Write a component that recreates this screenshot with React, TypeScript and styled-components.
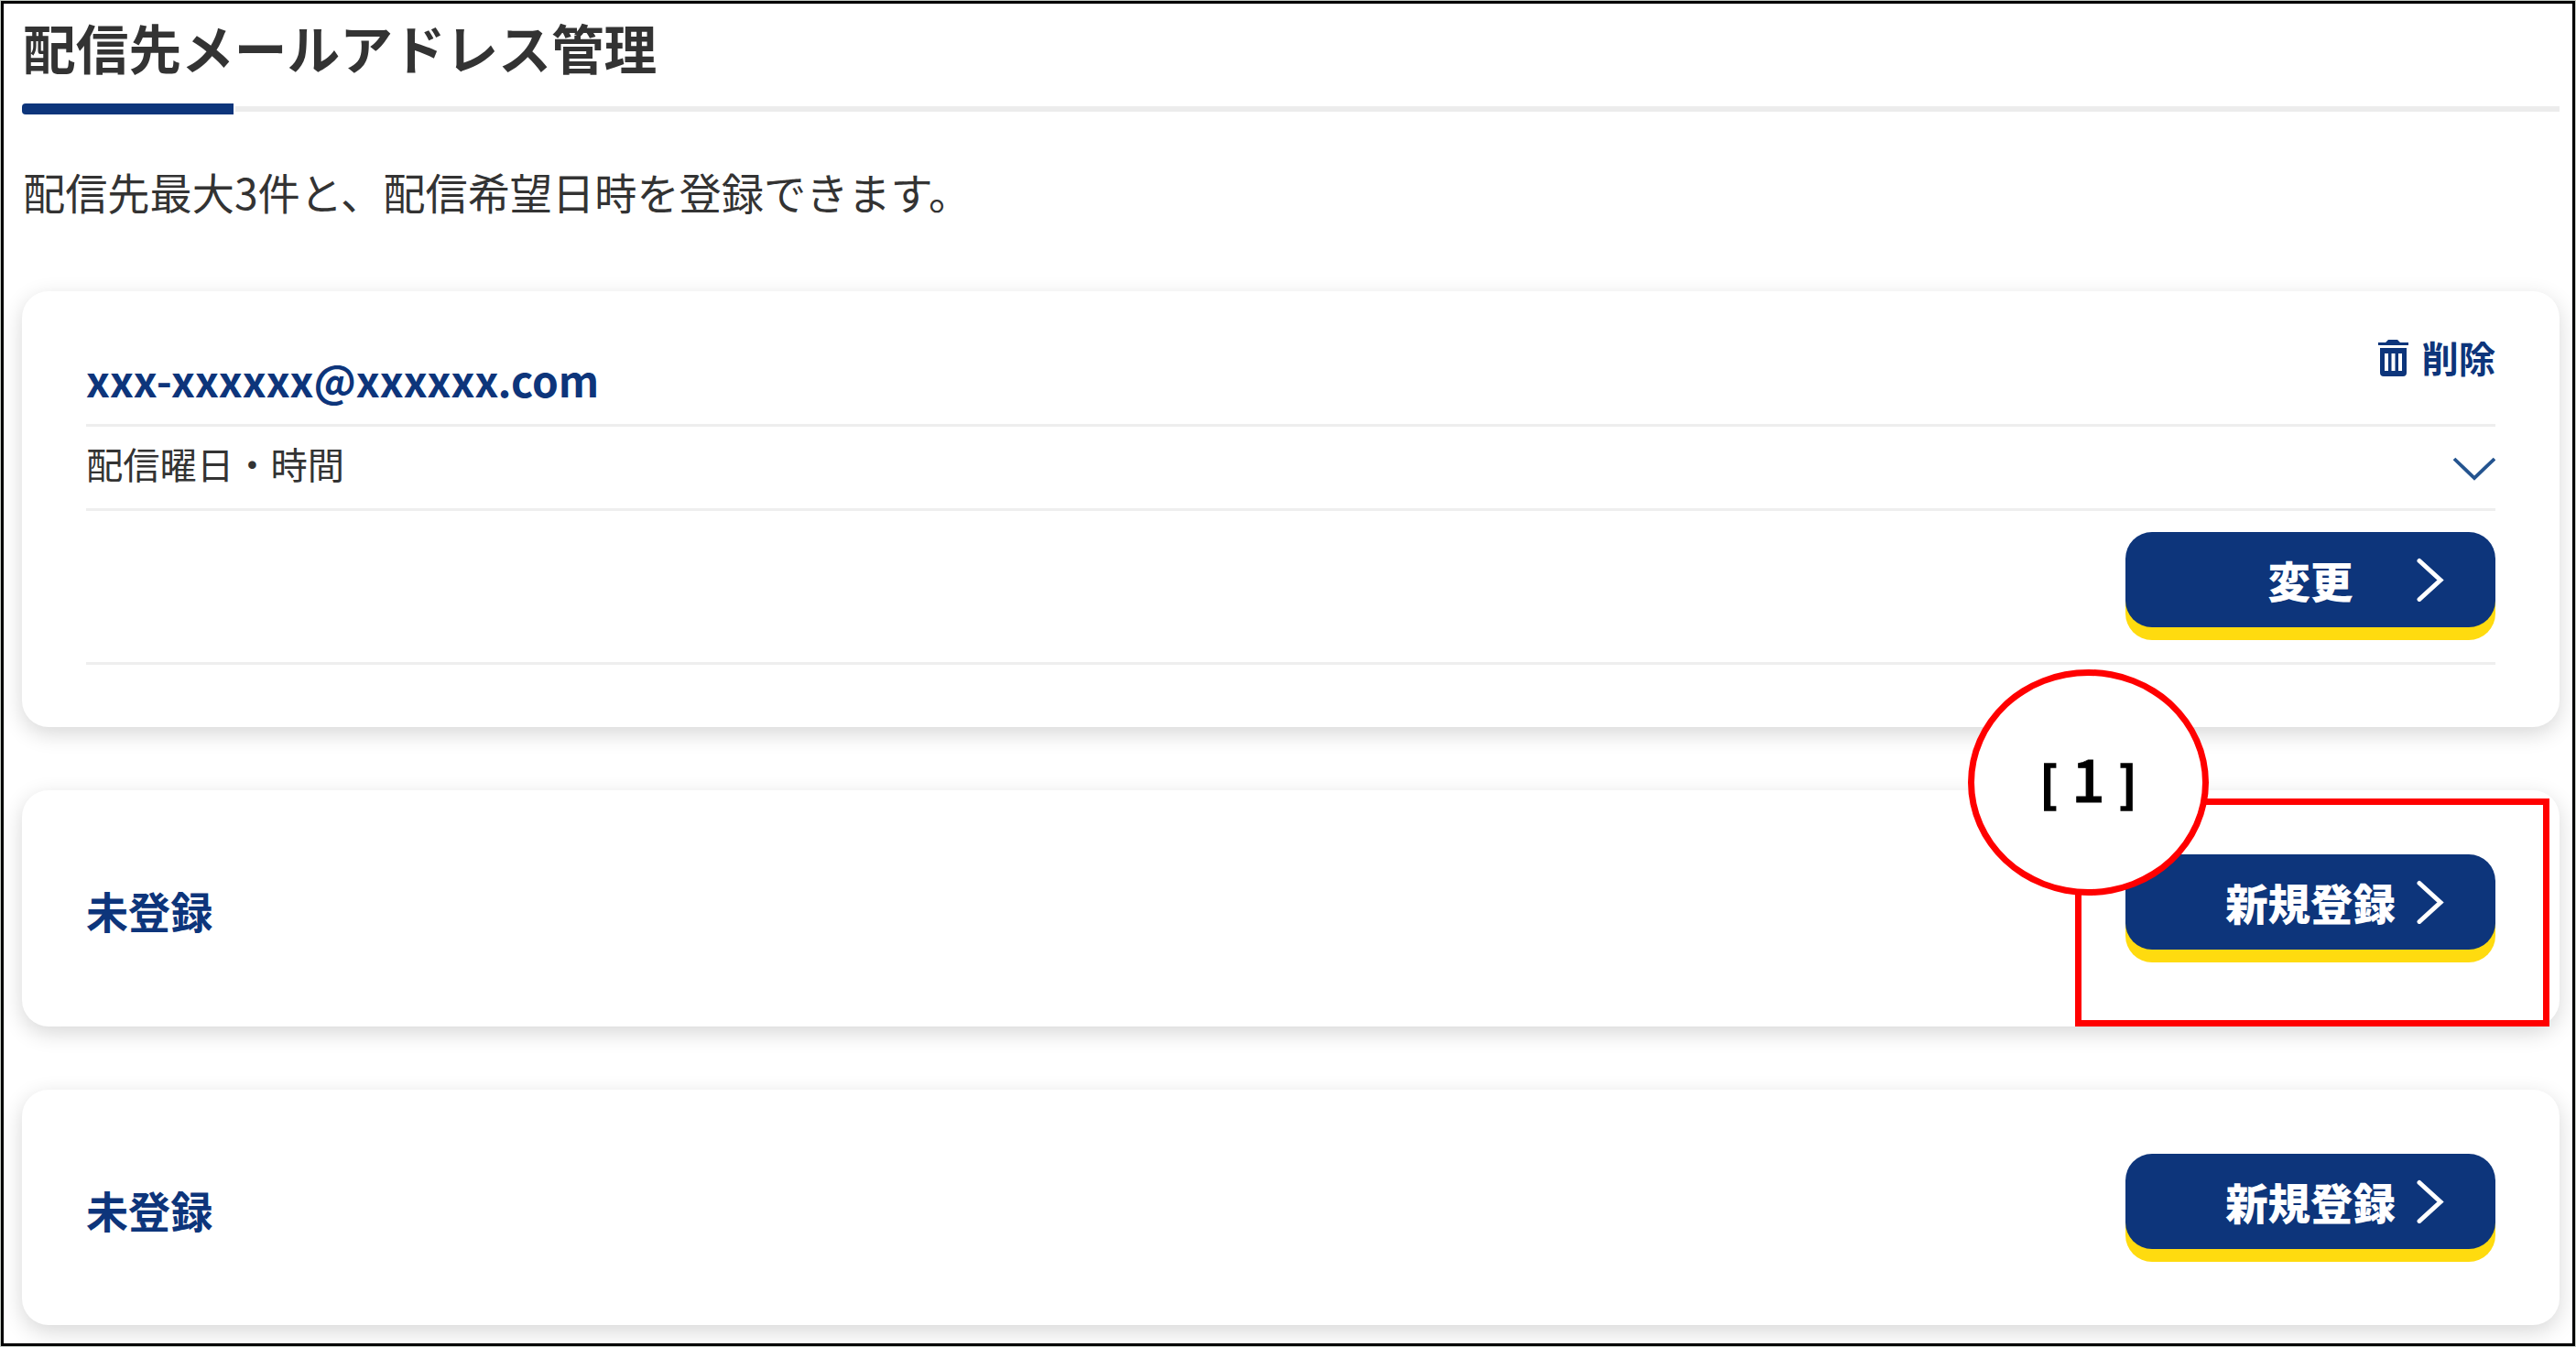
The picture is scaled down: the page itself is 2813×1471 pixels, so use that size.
import React, { FC } from 'react'
import styled, { createGlobalStyle } from 'styled-components'

const GlobalStyle = createGlobalStyle`
  * {
    box-sizing: border-box;
  }
  body {
    margin: 0;
    background: #fff;
    color: #333;
    font-family: 'Noto Sans CJK JP', 'Noto Sans', sans-serif;
  }
  h1, h2, p {
    margin: 0;
  }
`

const Frame = styled.main`
  position: relative;
  width: 2813px;
  height: 1471px;
  border: 1px solid #c4cac4;
  overflow: hidden;
`

const Page = styled.div`
  height: 100%;
  padding: 18px 14px 0 20px;
  border: 3px solid #000;
`

const Title = styled.h1`
  height: 91px;
  padding-left: 1px;
  font-size: 57.7px;
  line-height: 58px;
  font-weight: 700;
  white-space: nowrap;
`

const TitleLine = styled.div`
  display: flex;
  align-items: center;
  gap: 2px;
  height: 12px;

  &::before {
    content: '';
    width: 231px;
    height: 12px;
    border-radius: 4px 0 0 4px;
    background: #0d357b;
  }
  &::after {
    content: '';
    flex: 1;
    height: 6px;
    background: #ececec;
  }
`

const Lead = styled.p`
  height: 193px;
  padding: 61px 0 0 1px;
  font-size: 46.2px;
  line-height: 46px;
  white-space: nowrap;
`

const CardList = styled.div`
  display: flex;
  flex-direction: column;
  gap: 69px;
`

const Card = styled.section`
  padding: 0 70px;
  border-radius: 29px;
  background: #fff;
  box-shadow: 0 7px 23px rgba(0, 0, 0, 0.16);
`

const AddressCard = styled(Card)`
  height: 476px;
`

const EmptyCard = styled(Card)`
  display: flex;
  align-items: flex-start;
  justify-content: space-between;
  height: 257.5px;
  padding-top: 70px;
`

const Row = styled.div<{ $height: number }>`
  display: flex;
  justify-content: space-between;
  height: ${({ $height }) => $height}px;
  border-bottom: 3px solid #eee;
`

const CardTitle = styled.h2<{ $top: number }>`
  padding-top: ${({ $top }) => $top}px;
  color: #0d357b;
  font-size: 46.1px;
  line-height: 46px;
  font-weight: 700;
`

const DeleteButton = styled.button`
  display: flex;
  align-items: flex-start;
  gap: 13px;
  height: 60px;
  margin-top: 52px;
  padding: 0;
  border: 0;
  background: none;
  color: #0d357b;
  font: 700 40.3px/40px 'Noto Sans CJK JP', sans-serif;
`

const Schedule = styled.p`
  padding-top: 20px;
  font-size: 40.3px;
  line-height: 40px;
`

const ChevronDown = styled.svg`
  margin-top: 33px;
`

const ButtonRow = styled(Row)`
  justify-content: flex-end;
  padding-top: 23px;
`

const Button = styled.button`
  display: grid;
  grid-template-columns: 1fr auto 1fr;
  align-items: start;
  width: 404px;
  height: 104px;
  padding: 0;
  border: 0;
  border-radius: 29px;
  background: #0d357b;
  box-shadow: 0 14px 0 #ffdb0f;
  color: #fff;
  font: 900 46.4px/46px 'Noto Sans CJK JP', sans-serif;

  span {
    grid-column: 2;
    padding-top: 29px;
  }
  svg {
    justify-self: end;
    margin: 28px 56px 0 0;
  }
`

const Highlight = styled.div`
  position: absolute;
  left: 2265px;
  top: 871px;
  width: 518px;
  height: 249px;
  border: 7px solid #f00;
`

const Callout = styled.div`
  position: absolute;
  left: 2148px;
  top: 730px;
  display: flex;
  align-items: baseline;
  justify-content: center;
  gap: 15px;
  width: 263px;
  height: 247px;
  padding-top: 80px;
  border: 7px solid #f00;
  border-radius: 50%;
  background: #fff;
  color: #000;
  font-size: 52px;
  line-height: 60px;
  font-weight: 700;
  -webkit-text-stroke: 1.5px #000;

  b {
    font-size: 64px;
    font-weight: 500;
    -webkit-text-stroke-width: 0.8px;
  }
`

const TrashIcon: FC = () => (
  <svg width='36' height='42' viewBox='0 0 36 42'>
    <path
      fill='#0d357b'
      fillRule='evenodd'
      d='M2 4H10L13 1H23L26 4H35V7H2ZM4 10H33V37Q33 41 29 41H8Q4 41 4 37ZM9 16V35H13V16ZM16.5 16V35H20.5V16ZM24 16V35H28V16Z'
    />
  </svg>
)

interface ActionButtonProps {
  label: string
}
const ActionButton: FC<ActionButtonProps> = ({ label }) => (
  <Button type='button'>
    <span>{label}</span>
    <svg width='31' height='48' viewBox='0 0 31 48' fill='none'>
      <path d='M4 3.5L27 24.5L4 45.5' stroke='#fff' strokeWidth='5' strokeLinecap='round' />
    </svg>
  </Button>
)

const App: FC = () => {
  return (
    <>
      <GlobalStyle />
      <Frame>
        <Page>
          <Title>配信先メールアドレス管理</Title>
          <TitleLine />
          <Lead>配信先最大3件と、配信希望日時を登録できます。</Lead>
          <CardList>
            <AddressCard>
              <Row $height={148}>
                <CardTitle $top={73}>xxx-xxxxxx@xxxxxx.com</CardTitle>
                <DeleteButton type='button'>
                  <TrashIcon />
                  削除
                </DeleteButton>
              </Row>
              <Row $height={92}>
                <Schedule>配信曜日・時間</Schedule>
                <ChevronDown width='47' height='26' viewBox='0 0 47 26' fill='none'>
                  <path d='M2 2L24 23L46 2' stroke='#24548f' strokeWidth='3.8' />
                </ChevronDown>
              </Row>
              <ButtonRow $height={168}>
                <ActionButton label='変更' />
              </ButtonRow>
            </AddressCard>
            {[0, 1].map((slot) => (
              <EmptyCard key={slot}>
                <CardTitle $top={38}>未登録</CardTitle>
                <ActionButton label='新規登録' />
              </EmptyCard>
            ))}
          </CardList>
        </Page>
        <Highlight />
        <Callout>
          [<b>1</b>]
        </Callout>
      </Frame>
    </>
  )
}

export default App
